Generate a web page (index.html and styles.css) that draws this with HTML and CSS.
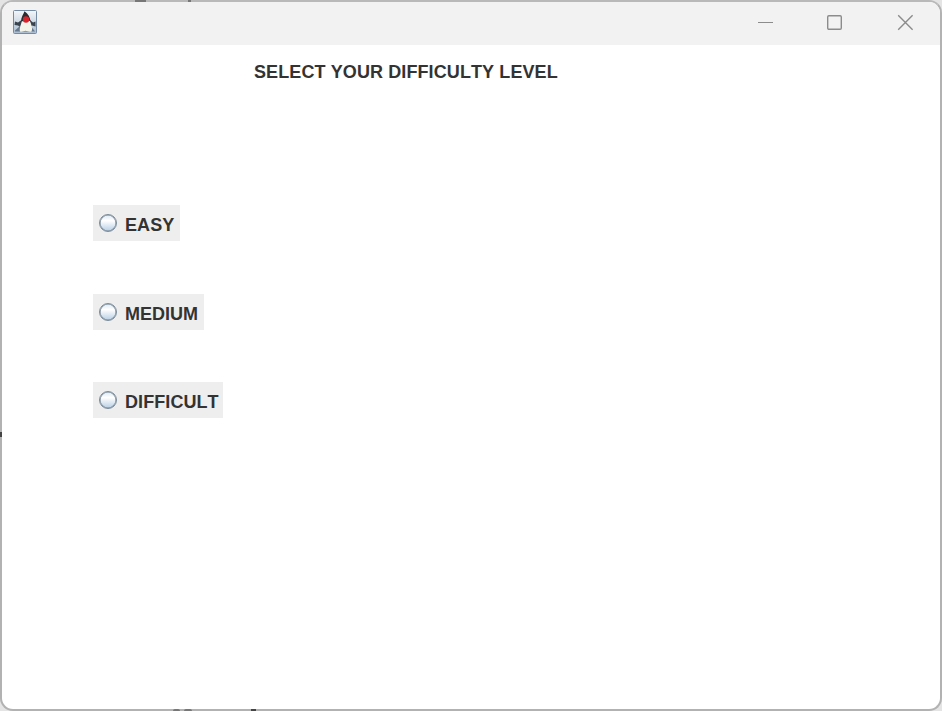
FILE: index.html
```html
<!DOCTYPE html>
<html lang="en">
<head>
<meta charset="utf-8">
<title>Difficulty</title>
<link rel="stylesheet" href="styles.css">
</head>
<body>
<div class="window">
  <header class="titlebar">
    <svg class="app-icon" width="24" height="24" viewBox="0 0 24 24">
      <defs>
        <linearGradient id="tile" x1="0" y1="0" x2="0" y2="1"><stop offset="0" stop-color="#f4f7fb"/><stop offset="1" stop-color="#a9bccf"/></linearGradient>
      </defs>
      <rect x=".5" y=".5" width="23" height="23" rx="1" fill="url(#tile)" stroke="#748aa5"/>
      <path d="M8.500 10 5 12.500 2 11.500 1.500 15 5 15.500 7 17 10 12zM17 10l3 2.500 2.500-1v5L19 15.500 17 17z" fill="#39444f"/>
      <path d="M2 20.500 7 16 18.500 17l3.500 4.500H2z" fill="#66788c"/>
      <path d="M9 10c-.5 4-3 8-2 11.500 2 1 4-.7 5.500-.7s4 1.700 6 .7c1.500-3-.5-8-2-11.500z" fill="#f5f4ea"/>
      <path d="M11.500 1.300C10.500 4 8 7.500 8 11.500l5-1 4.500.5C17 7.500 15 3.500 11.500 1.300z" fill="#292c31"/>
      <circle cx="13" cy="9.500" r="3.200" fill="#d8242c"/>
    </svg>
    <div class="controls">
      <svg width="16" height="16" viewBox="0 0 16 16"><path d="M0 8.500h15"/></svg>
      <svg width="16" height="16" viewBox="0 0 16 16"><rect x=".7" y="1.700" width="13.600" height="13.600" rx="1.200"/></svg>
      <svg width="16" height="16" viewBox="0 0 16 16"><path d="M.2 1.300l14.400 14.400M14.600 1.300.2 15.700"/></svg>
    </div>
  </header>
  <main class="content">
    <h1 class="heading">SELECT YOUR DIFFICULTY LEVEL</h1>
    <div class="options">
      <label class="option easy"><input type="radio" name="level"><span>EASY</span></label>
      <label class="option medium"><input type="radio" name="level"><span>MEDIUM</span></label>
      <label class="option difficult"><input type="radio" name="level"><span>DIFFICULT</span></label>
    </div>
  </main>
</div>
<i class="mark mark-top"></i>
<i class="mark mark-top-small"></i>
<i class="mark mark-left"></i>
<i class="mark mark-bottom-a"></i>
<i class="mark mark-bottom-b"></i>
<i class="mark mark-bottom-c"></i>
</body>
</html>
```
FILE: styles.css
```css
* { box-sizing: border-box; }
body {
  margin: 0;
  height: 711px;
  overflow: hidden;
  background: #e4e4e4;
  font-family: "Liberation Sans", Arial, sans-serif;
  font-kerning: none;
}
.window {
  height: 711px;
  border: 2px solid #b2b2b2;
  border-top-color: #b9b9b9;
  border-radius: 13px;
  background: #fff;
  overflow: hidden;
}
.titlebar {
  display: flex;
  justify-content: space-between;
  height: 43px;
  padding: 8px 26px 0 11px;
  background: #f2f2f2;
}
.controls {
  display: flex;
  gap: 54px;
  padding-top: 4px;
}
.controls svg {
  overflow: visible;
  fill: none;
  stroke: #8c8c8c;
  stroke-width: 1.4;
}
.controls svg:first-child { stroke-width: 1; margin-right: -1px; }
.controls svg:last-child { margin-left: 1px; }
.content { padding-top: 16px; }
.heading {
  margin: 0 0 0 252px;
  height: 22px;
  font-size: 18px;
  line-height: 22px;
  font-weight: bold;
  letter-spacing: .1px;
  color: #333;
  white-space: nowrap;
}
.options {
  display: grid;
  justify-items: start;
  row-gap: 52.500px;
  margin: 122px 0 0 91px;
}
.option {
  display: flex;
  align-items: center;
  height: 36px;
  padding: 0 0 0 5.500px;
  background: #eee;
  font-size: 18px;
  line-height: 22px;
  font-weight: bold;
  letter-spacing: .08px;
  color: #333;
}
.option span { padding-top: 3px; white-space: nowrap; }
.medium span { padding-top: 4px; letter-spacing: 0; }
.option input {
  appearance: none;
  width: 18px;
  height: 18px;
  margin: 0 8.500px 0 0;
  border: 1px solid #7a8a99;
  border-radius: 50%;
  background: linear-gradient(#dce8f3, #fff 35%, #b8cfe5);
  box-shadow: inset 0 0 0 .6px #7a8a99;
}
.easy { width: 87px; }
.medium { width: 111px; }
.difficult { width: 130px; }
.mark { position: absolute; background: #777; }
.mark-top { left: 135px; top: 0; width: 11px; height: 2px; }
.mark-top-small { left: 188px; top: 0; width: 3px; height: 2px; }
.mark-left { left: 0; top: 432px; width: 2px; height: 5px; background: #444; }
.mark-bottom-a { left: 173px; top: 709px; width: 7px; height: 2px; border-radius: 2px 2px 0 0; }
.mark-bottom-b { left: 184px; top: 709px; width: 8px; height: 2px; border-radius: 2px 2px 0 0; }
.mark-bottom-c { left: 251px; top: 709px; width: 5px; height: 2px; background: #444; }
```
